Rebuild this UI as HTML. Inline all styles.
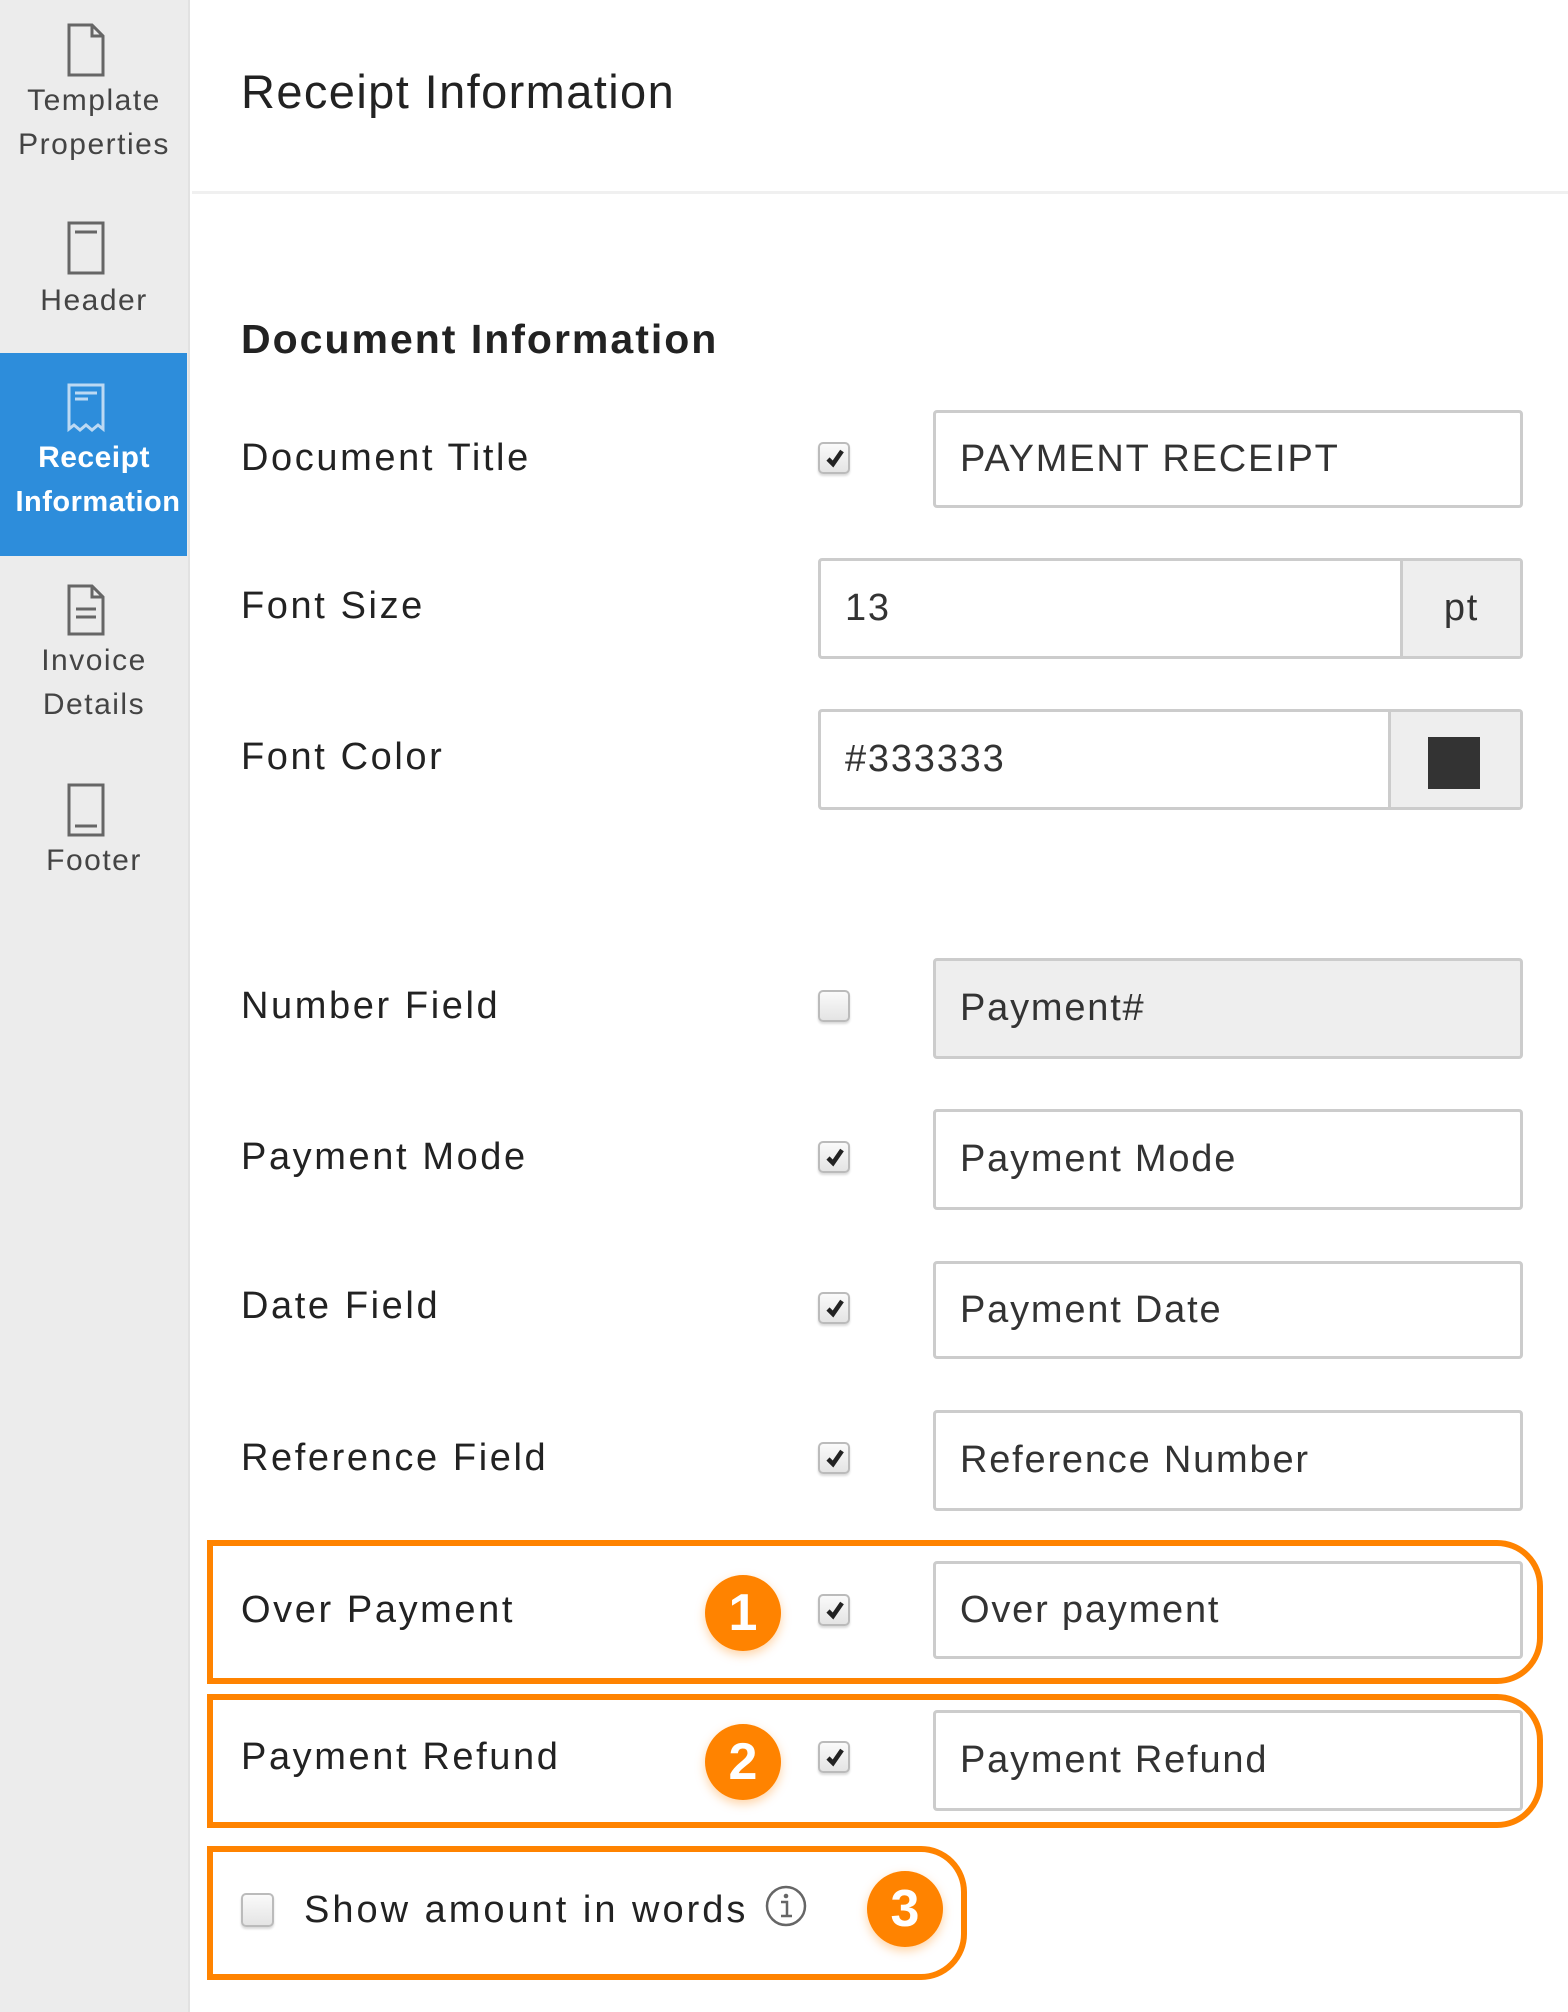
<!DOCTYPE html>
<html><head><meta charset="utf-8"><style>
*{box-sizing:border-box;margin:0;padding:0}
body{width:1568px;height:2012px;position:relative;background:#fff;font-family:"Liberation Sans",sans-serif;color:#333;overflow:hidden}
.side{position:absolute;left:0;top:0;width:190px;height:2012px;background:#ececec;border-right:2px solid #e2e2e2}
.act{position:absolute;left:0;top:353px;width:187px;height:203px;background:#2d8ddb}
.st{position:absolute;left:0;width:188px;text-align:center;font-size:30px;color:#444;line-height:44px;letter-spacing:1.5px}
.ic{position:absolute}
.h1{position:absolute;left:241px;top:64px;font-size:47px;color:#222;letter-spacing:1.4px}
.div{position:absolute;left:192px;top:191px;width:1376px;height:3px;background:#f0f0f0}
.h2{position:absolute;left:241px;top:316px;font-size:41px;font-weight:bold;color:#222;letter-spacing:2px}
.lb{position:absolute;left:241px;font-size:38px;color:#222;line-height:44px;letter-spacing:2.6px}
.cb{position:absolute;left:818px;width:32px;height:32px;border:2px solid #bbb;border-radius:5px;background:linear-gradient(#fafafa,#e4e4e4);box-shadow:0 2px 2px rgba(0,0,0,.15)}
.cb svg{position:absolute;left:5px;top:4px}
.in{position:absolute;left:933px;width:590px;height:98px;border:3px solid #ccc;border-radius:4px;background:#fff;font-size:38px;color:#333;padding-left:24px;line-height:92px;letter-spacing:1.8px}
.ob{position:absolute;border:6px solid #ff8300;border-radius:0 46px 46px 0}
.bd{position:absolute;width:76px;height:76px;border-radius:50%;background:#ff8300;color:#fff;font-size:52px;font-weight:bold;text-align:center;line-height:76px;box-shadow:0 4px 10px rgba(255,131,0,.35)}
</style></head><body>
<div class="side"></div>
<div class="act"></div>
<svg class="ic" style="left:66px;top:22px" width="40" height="56" viewBox="0 0 40 56"><path d="M3 3H26L37 14V53H3Z M26 3V14H37" fill="none" stroke="#666" stroke-width="3"/></svg>
<div class="st" style="top:79px">Template</div>
<div class="st" style="top:123px">Properties</div>
<svg class="ic" style="left:66px;top:220px" width="40" height="56" viewBox="0 0 40 56"><path d="M3 3H37V53H3Z M9 12H31" fill="none" stroke="#666" stroke-width="3"/></svg>
<div class="st" style="top:279px">Header</div>
<svg class="ic" style="left:66px;top:382px" width="40" height="52" viewBox="0 0 40 52"><path d="M3 3H37V47L32 43L26 48L20 43L14 48L8 43L3 47Z M9 11H31 M9 17H22" fill="none" stroke="#bcd9f3" stroke-width="3"/></svg>
<div class="st" style="top:436px;color:#fff;font-weight:bold;letter-spacing:0.5px">Receipt</div>
<div class="st" style="top:480px;color:#fff;font-weight:bold;left:4px;font-size:29px;letter-spacing:0.5px">Information</div>
<svg class="ic" style="left:66px;top:583px" width="40" height="54" viewBox="0 0 40 54"><path d="M3 3H26L37 14V51H3Z M26 3V14H37 M10 26H30 M10 34H30" fill="none" stroke="#666" stroke-width="3"/></svg>
<div class="st" style="top:639px">Invoice</div>
<div class="st" style="top:683px">Details</div>
<svg class="ic" style="left:66px;top:782px" width="40" height="56" viewBox="0 0 40 56"><path d="M3 3H37V53H3Z M9 44H31" fill="none" stroke="#666" stroke-width="3"/></svg>
<div class="st" style="top:839px">Footer</div>

<div class="h1">Receipt Information</div>
<div class="div"></div>
<div class="h2">Document Information</div>

<div class="lb" style="top:436px">Document Title</div>
<div class="cb" style="top:442px"><svg width="20" height="20" viewBox="0 0 20 20"><path d="M3 11L8 16L17 3" fill="none" stroke="#222" stroke-width="4.5"/></svg></div>
<div class="in" style="top:410px">PAYMENT RECEIPT</div>

<div class="lb" style="top:584px">Font Size</div>
<div class="in" style="top:558px;left:818px;width:705px;height:101px;line-height:95px;padding:0">
  <span style="padding-left:24px">13</span>
  <div style="position:absolute;right:0;top:0;width:120px;height:95px;background:#eee;border-left:3px solid #ccc;text-align:center">pt</div>
</div>

<div class="lb" style="top:735px">Font Color</div>
<div class="in" style="top:709px;left:818px;width:705px;height:101px;line-height:95px;padding:0">
  <span style="padding-left:24px">#333333</span>
  <div style="position:absolute;right:0;top:0;width:132px;height:95px;background:#eee;border-left:3px solid #ccc"><div style="position:absolute;left:37px;top:25px;width:52px;height:52px;background:#333"></div></div>
</div>

<div class="lb" style="top:984px">Number Field</div>
<div class="cb" style="top:990px"></div>
<div class="in" style="top:958px;background:#eee;height:101px;line-height:95px">Payment#</div>

<div class="lb" style="top:1135px">Payment Mode</div>
<div class="cb" style="top:1141px"><svg width="20" height="20" viewBox="0 0 20 20"><path d="M3 11L8 16L17 3" fill="none" stroke="#222" stroke-width="4.5"/></svg></div>
<div class="in" style="top:1109px;height:101px;line-height:95px">Payment Mode</div>

<div class="lb" style="top:1284px">Date Field</div>
<div class="cb" style="top:1292px"><svg width="20" height="20" viewBox="0 0 20 20"><path d="M3 11L8 16L17 3" fill="none" stroke="#222" stroke-width="4.5"/></svg></div>
<div class="in" style="top:1261px">Payment Date</div>

<div class="lb" style="top:1436px">Reference Field</div>
<div class="cb" style="top:1442px"><svg width="20" height="20" viewBox="0 0 20 20"><path d="M3 11L8 16L17 3" fill="none" stroke="#222" stroke-width="4.5"/></svg></div>
<div class="in" style="top:1410px;height:101px;line-height:95px">Reference Number</div>

<div class="ob" style="left:207px;top:1540px;width:1336px;height:144px"></div>
<div class="lb" style="top:1588px">Over Payment</div>
<div class="bd" style="left:705px;top:1575px">1</div>
<div class="cb" style="top:1594px"><svg width="20" height="20" viewBox="0 0 20 20"><path d="M3 11L8 16L17 3" fill="none" stroke="#222" stroke-width="4.5"/></svg></div>
<div class="in" style="top:1561px">Over payment</div>

<div class="ob" style="left:207px;top:1694px;width:1336px;height:134px"></div>
<div class="lb" style="top:1735px">Payment Refund</div>
<div class="bd" style="left:705px;top:1724px">2</div>
<div class="cb" style="top:1741px"><svg width="20" height="20" viewBox="0 0 20 20"><path d="M3 11L8 16L17 3" fill="none" stroke="#222" stroke-width="4.5"/></svg></div>
<div class="in" style="top:1710px;height:101px;line-height:95px">Payment Refund</div>

<div class="ob" style="left:207px;top:1846px;width:760px;height:134px"></div>
<div class="cb" style="left:241px;top:1893px;width:33px;height:34px"></div>
<div class="lb" style="left:304px;top:1888px;letter-spacing:3px">Show amount in words</div>
<svg class="ic" style="left:764px;top:1884px" width="44" height="44" viewBox="0 0 44 44"><circle cx="22" cy="22" r="19" fill="none" stroke="#666" stroke-width="2.5"/><circle cx="22" cy="12" r="2.3" fill="#666"/><path d="M17 18H23V32 M17 32H28" fill="none" stroke="#666" stroke-width="2.5"/></svg>
<div class="bd" style="left:867px;top:1871px">3</div>
</body></html>
